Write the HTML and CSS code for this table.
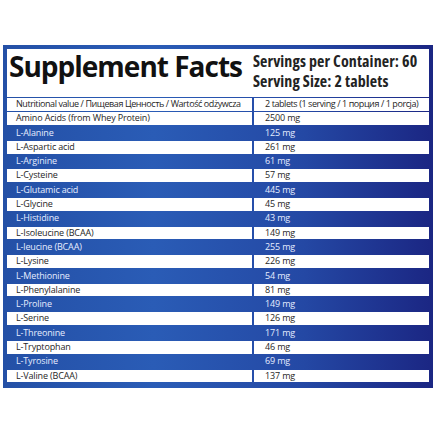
FILE: index.html
```html
<!DOCTYPE html>
<html lang="en">
<head>
    <meta charset="UTF-8">
    <title>Supplement Facts</title>
    <link rel="stylesheet" href="styles.css">
</head>
<body>

<div class="label">
    <div class="head">
        <h1 class="title">Supplement Facts</h1>
        <div class="serving">
            <p>Servings per Container: 60</p>
            <p>Serving Size: 2 tablets</p>
        </div>
    </div>
    <div class="facts">
        <div class="row white top">
            <span>Nutritional value / Пищевая Ценность / Wartość odżywcza</span>
            <span>2 tablets (1 serving / 1 порция / 1 porcja)</span>
        </div>
        <div class="row white"><span>Amino Acids (from Whey Protein)</span><span>2500 mg</span></div>
        <div class="row blue"><span>L-Alanine</span><span>125 mg</span></div>
        <div class="row white"><span>L-Aspartic acid</span><span>261 mg</span></div>
        <div class="row blue"><span>L-Arginine</span><span>61 mg</span></div>
        <div class="row white"><span>L-Cysteine</span><span>57 mg</span></div>
        <div class="row blue"><span>L-Glutamic acid</span><span>445 mg</span></div>
        <div class="row white"><span>L-Glycine</span><span>45 mg</span></div>
        <div class="row blue"><span>L-Histidine</span><span>43 mg</span></div>
        <div class="row white"><span>L-Isoleucine (BCAA)</span><span>149 mg</span></div>
        <div class="row blue"><span>L-leucine (BCAA)</span><span>255 mg</span></div>
        <div class="row white"><span>L-Lysine</span><span>226 mg</span></div>
        <div class="row blue"><span>L-Methionine</span><span>54 mg</span></div>
        <div class="row white"><span>L-Phenylalanine</span><span>81 mg</span></div>
        <div class="row blue"><span>L-Proline</span><span>149 mg</span></div>
        <div class="row white"><span>L-Serine</span><span>126 mg</span></div>
        <div class="row blue"><span>L-Threonine</span><span>171 mg</span></div>
        <div class="row white"><span>L-Tryptophan</span><span>46 mg</span></div>
        <div class="row blue"><span>L-Tyrosine</span><span>69 mg</span></div>
        <div class="row white"><span>L-Valine (BCAA)</span><span>137 mg</span></div>
    </div>
</div>

</body>
</html>
```

FILE: styles.css
```css
html, body {
    margin: 0;
    padding: 0;
    background: #fff;
}

body {
    font-family: "Open Sans", "Noto Sans", sans-serif;
    color: #1d1d1d;
}

.label {
    margin: 45px 0 0 3px;
    width: 430px;
    height: 343px;
    box-sizing: border-box;
    padding: 4px;
    background: linear-gradient(90deg, #2450a6 0%, #2a5cb6 35%, #2448a4 70%, #1b2683 100%);
}

.head {
    display: flex;
    align-items: flex-start;
    height: 48px;
    background: #fff;
    white-space: nowrap;
}

.title {
    margin: 3px 0 0 2px;
    font-size: 28px;
    line-height: 28px;
    font-weight: 700;
    letter-spacing: -1px;
    color: #111;
}

.serving {
    margin: 3px 0 0 11px;
    font-size: 16px;
    font-weight: 700;
    font-stretch: 75%;
    letter-spacing: 0.1px;
    color: #232323;
}

.serving p {
    margin: 0;
    line-height: 19.5px;
}

.facts {
    display: flex;
    flex-direction: column;
}

.row {
    display: grid;
    grid-template-columns: 245px 1fr;
    column-gap: 2px;
    height: 14.3px;
    font-size: 9px;
    letter-spacing: -0.15px;
    line-height: 12.6px;
}

.row.top {
    letter-spacing: -0.42px;
}

.row span {
    padding-left: 9px;
    white-space: nowrap;
    overflow: hidden;
}

.row span + span {
    padding-left: 11px;
}

.white span {
    margin: 1px 0 0.7px;
    background: #fff;
    color: #262626;
}

.blue span {
    margin: 1px 0 0.7px;
    color: #e6edff;
}
```
